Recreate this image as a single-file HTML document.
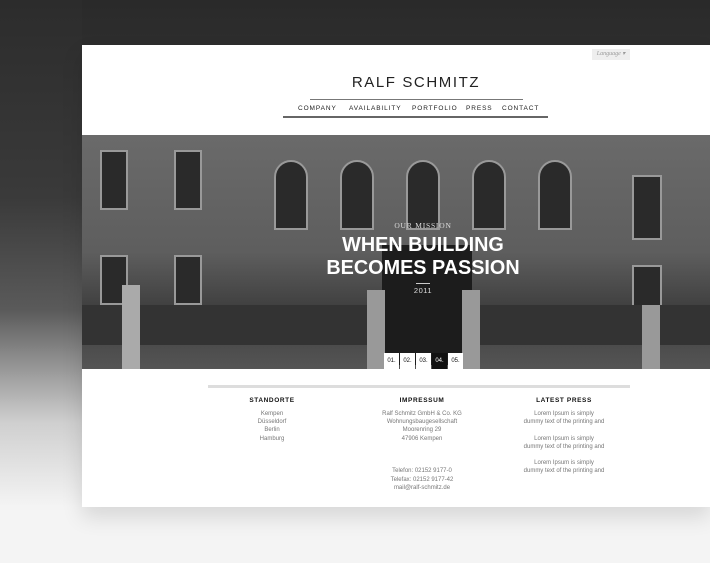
<!DOCTYPE html>
<html><head><style>
*{margin:0;padding:0;box-sizing:border-box}
body{width:710px;height:563px;overflow:hidden;position:relative;font-family:"Liberation Sans",sans-serif;background:#f4f4f4}
.bgtop{position:absolute;left:0;top:0;width:710px;height:400px;background:linear-gradient(180deg,#2a2a2a 0%,#333 30%,#555 60%,#bbb 85%,#f4f4f4 100%)}
.bgl{position:absolute;left:0;top:0;width:82px;height:563px;background:linear-gradient(180deg,#2c2c2c 0%,#3a3a3a 35%,#5a5a5a 55%,#cfcfcf 75%,#f4f4f4 90%)}
.card{position:absolute;left:82px;top:45px;width:628px;height:462px;background:#fff;box-shadow:0 10px 20px rgba(0,0,0,.12)}
.lang{position:absolute;left:592px;top:49px;width:38px;height:11px;background:#eee;font:italic 6px "Liberation Serif",serif;color:#999;text-align:center;line-height:11px}
.c{position:absolute;left:216px;width:400px;text-align:center}
.logo{top:74px;font-size:15px;letter-spacing:1.6px;color:#222}
.l1{position:absolute;left:310px;top:99px;width:213px;height:1px;background:#777}
.nav{position:absolute;left:283px;top:105px;width:265px;font-size:6.5px;letter-spacing:.9px;color:#222}
.nav span{position:absolute;top:0}
.l2{position:absolute;left:283px;top:116px;width:265px;height:2px;background:#666}
.hero{position:absolute;left:82px;top:135px;width:628px;height:234px;background:linear-gradient(180deg,#6a6a6a 0%,#5e5e5e 50%,#3e3e3e 75%,#555 100%);overflow:hidden}
.w{position:absolute;background:#2a2a2a;border:2px solid #999}
.hedge{position:absolute;background:#2a2a2a}
.txt{position:absolute;left:223px;width:400px;text-align:center;color:#fff}
.pg{position:absolute;top:353px;height:16px;width:15px;background:#fff;color:#111;font-size:6px;text-align:center;line-height:16px}
.bar{position:absolute;left:208px;top:385px;width:422px;height:3px;background:#ddd}
.col{position:absolute;width:140px;text-align:center;font-size:6px;color:#777;line-height:8.2px}
.col h4{font-size:6.5px;color:#111;letter-spacing:.6px;margin-bottom:4px;line-height:10px}
</style></head><body>
<div class="bgtop"></div><div class="bgl"></div>
<div class="card"></div>
<div class="lang">Language ▾</div>
<div class="c logo">RALF SCHMITZ</div>
<div class="l1"></div>
<div class="nav"><span style="left:15px">COMPANY</span><span style="left:66px">AVAILABILITY</span><span style="left:129px">PORTFOLIO</span><span style="left:183px">PRESS</span><span style="left:219px">CONTACT</span></div>
<div class="l2"></div>
<div class="hero">
<div class="w" style="left:18px;top:15px;width:28px;height:60px"></div>
<div class="w" style="left:92px;top:15px;width:28px;height:60px"></div>
<div class="w" style="left:192px;top:25px;width:34px;height:70px;border-radius:17px 17px 0 0"></div>
<div class="w" style="left:258px;top:25px;width:34px;height:70px;border-radius:17px 17px 0 0"></div>
<div class="w" style="left:324px;top:25px;width:34px;height:70px;border-radius:17px 17px 0 0"></div>
<div class="w" style="left:390px;top:25px;width:34px;height:70px;border-radius:17px 17px 0 0"></div>
<div class="w" style="left:456px;top:25px;width:34px;height:70px;border-radius:17px 17px 0 0"></div>
<div class="w" style="left:550px;top:40px;width:30px;height:65px"></div>
<div class="w" style="left:18px;top:120px;width:28px;height:50px"></div>
<div class="w" style="left:92px;top:120px;width:28px;height:50px"></div>
<div class="w" style="left:550px;top:130px;width:30px;height:45px"></div>
<div class="hedge" style="left:0;top:170px;width:628px;height:40px;background:#333"></div>
<div class="hedge" style="left:300px;top:110px;width:90px;height:120px;background:#1c1c1c"></div>
<div style="position:absolute;left:40px;top:150px;width:18px;height:84px;background:#aaa"></div>
<div style="position:absolute;left:285px;top:155px;width:18px;height:79px;background:#999"></div>
<div style="position:absolute;left:380px;top:155px;width:18px;height:79px;background:#999"></div>
<div style="position:absolute;left:560px;top:170px;width:18px;height:64px;background:#999"></div>
</div>
<div class="txt" style="top:221px;font:7.5px 'Liberation Serif',serif;letter-spacing:.8px;color:#ddd">OUR MISSION</div>
<div class="txt" style="top:234px;font-size:20px;font-weight:bold;line-height:23px;transform:scaleX(.99)">WHEN BUILDING<br>BECOMES PASSION</div>
<div style="position:absolute;left:416px;top:283px;width:14px;height:1px;background:#ccc"></div>
<div class="txt" style="top:286px;font-size:7.5px;color:#ddd;letter-spacing:.5px">2011</div>
<div class="pg" style="left:384px">01.</div><div class="pg" style="left:400px">02.</div><div class="pg" style="left:416px">03.</div><div class="pg" style="left:432px;background:#111;color:#fff">04.</div><div class="pg" style="left:448px">05.</div>
<div class="bar"></div>
<div class="col" style="left:202px;top:396px"><h4>STANDORTE</h4>Kempen<br>Düsseldorf<br>Berlin<br>Hamburg</div>
<div class="col" style="left:352px;top:396px"><h4>IMPRESSUM</h4>Ralf Schmitz GmbH &amp; Co. KG<br>Wohnungsbaugesellschaft<br>Moorenring 29<br>47906 Kempen<br><br><br><br>Telefon: 02152 9177-0<br>Telefax: 02152 9177-42<br>mail@ralf-schmitz.de</div>
<div class="col" style="left:494px;top:396px"><h4>LATEST PRESS</h4>Lorem Ipsum is simply<br>dummy text of the printing and<br><br>Lorem Ipsum is simply<br>dummy text of the printing and<br><br>Lorem Ipsum is simply<br>dummy text of the printing and</div>
</body></html>
